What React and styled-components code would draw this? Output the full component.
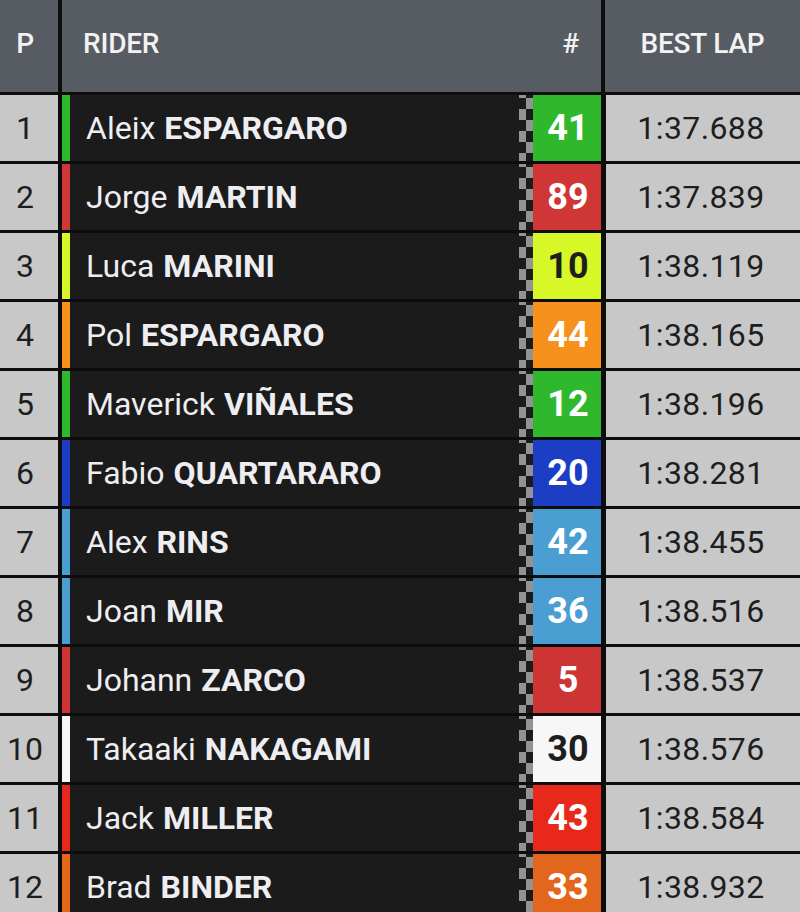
import React from 'react';
import styled, { createGlobalStyle } from 'styled-components';

const GlobalStyle = createGlobalStyle`
  html, body {
    margin: 0;
    padding: 0;
    background: #0d0d0d;
  }
  body {
    font-family: Roboto, "Liberation Sans", sans-serif;
  }
`;

const riders = [
  { pos: 1, first: 'Aleix', last: 'ESPARGARO', num: 41, color: '#2fb82c', dark: false, lap: '1:37.688' },
  { pos: 2, first: 'Jorge', last: 'MARTIN', num: 89, color: '#cf3737', dark: false, lap: '1:37.839' },
  { pos: 3, first: 'Luca', last: 'MARINI', num: 10, color: '#d7f726', dark: true, lap: '1:38.119' },
  { pos: 4, first: 'Pol', last: 'ESPARGARO', num: 44, color: '#f5911c', dark: false, lap: '1:38.165' },
  { pos: 5, first: 'Maverick', last: 'VIÑALES', num: 12, color: '#2fb82c', dark: false, lap: '1:38.196' },
  { pos: 6, first: 'Fabio', last: 'QUARTARARO', num: 20, color: '#1b3ec4', dark: false, lap: '1:38.281' },
  { pos: 7, first: 'Alex', last: 'RINS', num: 42, color: '#4a9ed2', dark: false, lap: '1:38.455' },
  { pos: 8, first: 'Joan', last: 'MIR', num: 36, color: '#4a9ed2', dark: false, lap: '1:38.516' },
  { pos: 9, first: 'Johann', last: 'ZARCO', num: 5, color: '#cd3535', dark: false, lap: '1:38.537' },
  { pos: 10, first: 'Takaaki', last: 'NAKAGAMI', num: 30, color: '#f7f7f7', dark: true, lap: '1:38.576' },
  { pos: 11, first: 'Jack', last: 'MILLER', num: 43, color: '#e9281c', dark: false, lap: '1:38.584' },
  { pos: 12, first: 'Brad', last: 'BINDER', num: 33, color: '#e2661b', dark: false, lap: '1:38.932' },
];

const Table = styled.div`
  display: flex;
  flex-direction: column;
  gap: 3px;
  width: 800px;
  height: 912px;
  overflow: hidden;
  background: #0d0d0d;
`;

const HeaderRow = styled.div`
  display: grid;
  grid-template-columns: 58px 1fr 195px;
  column-gap: 4px;
  height: 92px;
  flex-shrink: 0;
`;

const HeaderCell = styled.div`
  display: flex;
  align-items: center;
  justify-content: ${(p) => p.$align || 'flex-start'};
  padding: ${(p) => p.$pad || '0 0 5px'};
  background: #575c63;
  color: #f2f2f2;
  font-size: 28px;
  font-weight: 500;
  letter-spacing: -0.2px;
`;

const Row = styled.div`
  display: grid;
  grid-template-columns: 62px 8px 1fr 14px 68px 199px;
  height: 66px;
  flex-shrink: 0;
`;

const PosCell = styled.div`
  display: flex;
  align-items: center;
  justify-content: center;
  padding-right: 8px;
  border-right: 4px solid #0d0d0d;
  background: #c8c8c9;
  color: #1e1e1e;
  font-size: 32px;
  font-weight: 400;
`;

const TeamStrip = styled.div`
  background: ${(p) => p.$color};
`;

const RiderCell = styled.div`
  display: flex;
  align-items: center;
  padding-left: 16px;
  background: #1b1b1b;
  color: #eeeef2;
  font-size: 32px;
  white-space: nowrap;
`;

const FirstName = styled.span`
  font-weight: 400;
  margin-right: 9px;
`;

const LastName = styled.span`
  font-weight: 700;
`;

const Checker = styled.div`
  background-color: #1b1b1b;
  background-image: conic-gradient(
    #939393 0 25%,
    transparent 0 50%,
    #939393 0 75%,
    transparent 0
  );
  background-size: 14px 22px;
  background-position: 0 3px;
`;

const NumberBox = styled.div`
  display: flex;
  align-items: center;
  justify-content: center;
  padding-left: 2px;
  background: ${(p) => p.$color};
  color: ${(p) => (p.$dark ? '#1e1e1e' : '#ffffff')};
  font-size: 36px;
  font-weight: 700;
`;

const LapCell = styled.div`
  display: flex;
  align-items: center;
  justify-content: center;
  border-left: 5px solid #0d0d0d;
  background: #c8c8c9;
  color: #1e1e1e;
  font-size: 32px;
  font-weight: 400;
  letter-spacing: 0.4px;
  padding-right: 4px;
`;

export default function App() {
  return (
    <>
      <GlobalStyle />
      <Table>
        <HeaderRow>
          <HeaderCell $align="center" $pad="0 8px 5px 0">P</HeaderCell>
          <HeaderCell $align="space-between" $pad="0 22px 5px 21px">
            <span>RIDER</span>
            <span>#</span>
          </HeaderCell>
          <HeaderCell $align="center">BEST LAP</HeaderCell>
        </HeaderRow>
        {riders.map((r) => (
          <Row key={r.pos}>
            <PosCell>{r.pos}</PosCell>
            <TeamStrip $color={r.color} />
            <RiderCell>
              <FirstName>{r.first}</FirstName>
              <LastName>{r.last}</LastName>
            </RiderCell>
            <Checker />
            <NumberBox $color={r.color} $dark={r.dark}>
              {r.num}
            </NumberBox>
            <LapCell>{r.lap}</LapCell>
          </Row>
        ))}
      </Table>
    </>
  );
}
